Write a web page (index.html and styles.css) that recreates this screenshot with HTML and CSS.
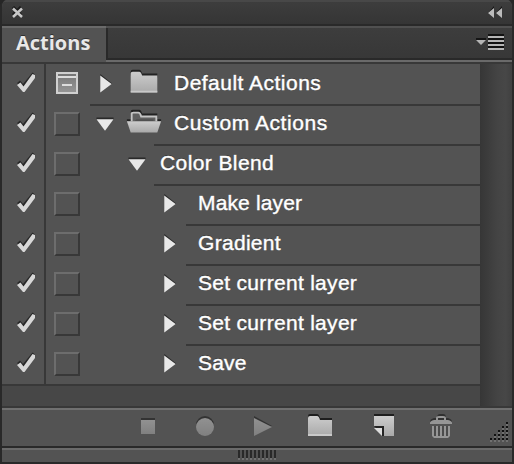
FILE: index.html
```html
<!DOCTYPE html>
<html lang="en">
<head>
<meta charset="utf-8">
<title>Actions</title>
<link rel="stylesheet" href="styles.css">
</head>
<body>
<svg class="defs" width="0" height="0">
  <defs>
    <linearGradient id="silver" x1="0" y1="0" x2="0" y2="1"><stop offset="0" stop-color="#cdcdcd"/><stop offset="1" stop-color="#a9a9a9"/></linearGradient>
    <linearGradient id="dim" x1="0" y1="0" x2="0" y2="1"><stop offset="0" stop-color="#919191"/><stop offset="1" stop-color="#808080"/></linearGradient>
    <linearGradient id="dialog" x1="0" y1="0" x2="0" y2="1"><stop offset="0" stop-color="#777"/><stop offset="1" stop-color="#969696"/></linearGradient>
    <symbol id="check" viewBox="0 0 42 40"><path d="M15 17l3-2.500 3 3.500 9.500-11.500 2.500 2-11 16z" fill="#292929"/><path d="M15 19l3.500-2.500 3 4L30.500 8l2.500 1v3L22.500 26H21z" fill="#d8d8d8"/></symbol>
    <symbol id="right" viewBox="0 0 18 40"><path d="M4 8.500L16.500 18.500 4 25z" fill="#292929"/><path d="M4 10L16 19 4 28z" fill="#e8e8e8"/></symbol>
    <symbol id="down" viewBox="0 0 18 40"><path d="M0 12h18v2l-2 2H2l-2-2z" fill="#292929"/><path d="M0 14h18L9 26z" fill="#e8e8e8"/></symbol>
    <symbol id="folder" viewBox="0 0 36 40"><path d="M4 10V6q0-2 2-2h7q2 0 3 4h16v4z" fill="#222"/><path d="M4 8q0-2 2-2h7q2 0 3 4h16v18H4z" fill="url(#silver)"/><path d="M4 26h28v2H4z" fill="#c9c9c9"/></symbol>
    <symbol id="folder-open" viewBox="0 0 36 40"><path d="M4 9V6q0-2 2-2h7q2 0 3 4h16v5H4zM0 14h36v2H0z" fill="#222"/><path d="M5 16V8q0-1 2-1h5q2 0 3 4h16v5" fill="#606060" stroke="#c4c4c4" stroke-width="2"/><path d="M10 14h18v2H8z" fill="#505050"/><path d="M0 16h36l-4 12H4z" fill="url(#silver)"/></symbol>
  </defs>
</svg>
<main class="panel">
  <header class="titlebar">
    <svg width="14" height="14" viewBox="0 0 14 14"><path d="M3 1l8 8M11 1l-8 8" stroke="#1b1b1b" stroke-width="3"/><path d="M3 2.500l9 8.500M12 2.500L3 11" stroke="#c8c8c8" stroke-width="2.500"/></svg>
    <svg width="14" height="14" viewBox="0 0 14 14"><path d="M6 0v5L0 7zM14 0v5L8 7z" fill="#171717"/><path d="M6 2v10L0 7zM14 2v10L8 7z" fill="#bcbcbc"/></svg>
  </header>
  <nav class="tabs">
    <div class="tab">Actions</div>
    <div class="tab-rest">
      <svg width="28" height="18" viewBox="0 0 28 18"><path d="M0 4h10v2L5 9 0 6z" fill="#151515"/><path d="M0 6h10L5 11z" fill="#b5b5b5"/><path d="M12 1h16M12 5h16M12 9h16M12 13h16" stroke="#111" stroke-width="2"/><path d="M12 3h16M12 7h16M12 11h16M12 15h16" stroke="#b5b5b5" stroke-width="2"/></svg>
    </div>
  </nav>
  <section class="content">
    <div class="list">
      <div class="row first"><div class="check"><svg width="42" height="40"><use href="#check"/></svg></div><div class="toggle"><svg class="dialog" width="22" height="22"><path d="M1 1h20v20H1z" fill="url(#dialog)" stroke="#d0d0d0" stroke-width="2"/><path d="M2 5h18M6 13h10" stroke="#ddd" stroke-width="2"/><path d="M2 3h18" stroke="#777" stroke-width="2"/></svg></div><div class="item set"><svg width="18" height="40"><use href="#right"/></svg><svg class="folder" width="36" height="40"><use href="#folder"/></svg><span class="t1">Default Actions</span></div></div>
      <div class="row"><div class="check"><svg width="42" height="40"><use href="#check"/></svg></div><div class="toggle"><i class="box"></i></div><div class="item set open"><svg width="18" height="40"><use href="#down"/></svg><svg class="folder" width="36" height="40"><use href="#folder-open"/></svg><span class="t2">Custom Actions</span></div></div>
      <div class="row"><div class="check"><svg width="42" height="40"><use href="#check"/></svg></div><div class="toggle"><i class="box"></i></div><div class="item action"><svg width="18" height="40"><use href="#down"/></svg><span class="t3">Color Blend</span></div></div>
      <div class="row"><div class="check"><svg width="42" height="40"><use href="#check"/></svg></div><div class="toggle"><i class="box"></i></div><div class="item step"><svg width="18" height="40"><use href="#right"/></svg><span class="t4">Make layer</span></div></div>
      <div class="row"><div class="check"><svg width="42" height="40"><use href="#check"/></svg></div><div class="toggle"><i class="box"></i></div><div class="item step"><svg width="18" height="40"><use href="#right"/></svg><span>Gradient</span></div></div>
      <div class="row"><div class="check"><svg width="42" height="40"><use href="#check"/></svg></div><div class="toggle"><i class="box"></i></div><div class="item step"><svg width="18" height="40"><use href="#right"/></svg><span>Set current layer</span></div></div>
      <div class="row"><div class="check"><svg width="42" height="40"><use href="#check"/></svg></div><div class="toggle"><i class="box"></i></div><div class="item step"><svg width="18" height="40"><use href="#right"/></svg><span>Set current layer</span></div></div>
      <div class="row last"><div class="check"><svg width="42" height="40"><use href="#check"/></svg></div><div class="toggle"><i class="box"></i></div><div class="item step"><svg width="18" height="40"><use href="#right"/></svg><span class="t4">Save</span></div></div>
    </div>
    <div class="scroll"></div>
  </section>
  <footer class="toolbar">
    <svg width="14" height="24"><path d="M0 4h14v3H0z" fill="#333"/><path d="M0 6h14v14H0z" fill="url(#dim)"/></svg>
    <svg width="18" height="24"><circle cx="9" cy="11" r="9" fill="#333"/><circle cx="9" cy="13" r="9" fill="url(#dim)"/></svg>
    <svg width="18" height="24"><path d="M0 2l18 10-18 8z" fill="#333"/><path d="M0 4l18 9-18 9z" fill="url(#dim)"/></svg>
    <svg width="24" height="24"><path d="M0 5V2q0-2 2-2h7q2 0 3 4h12v4z" fill="#1e1e1e"/><path d="M0 4q0-2 2-2h7q2 0 3 4h12v16H0z" fill="url(#silver)"/><path d="M0 20h24v2H0z" fill="#c9c9c9"/></svg>
    <svg width="20" height="24"><path d="M0 0h20v3H0z" fill="#1e1e1e"/><path d="M0 2h20v20H10V12H0z" fill="url(#silver)"/><path d="M0 12h10v10H8v-8H2z" fill="#242424"/><path d="M0 14h8v8z" fill="#ddd"/></svg>
    <svg width="22" height="24"><path d="M0 8q0-3 4-4h3q0-4 3-4h3q3 0 3 4h2q4 1 4 4z" fill="#303030"/><path d="M0 10V9q0-2 4-3h14q4 1 4 3v1z" fill="#969696"/><path d="M7 7V4q0-1 2-1h4q2 0 2 1v3" fill="none" stroke="#969696" stroke-width="2"/><path d="M8 5h6" stroke="#333" stroke-width="2"/><path d="M2 12h18v10l-2 2H4l-2-2z" fill="#969696"/><path d="M5 12v10M9 12v10M13 12v10M17 12v10" stroke="#4b4b4b" stroke-width="2"/></svg>
    <svg width="18" height="20"><path d="M17 0v18M13 4v14M9 8v10M5 12v6M1 16v2" stroke="#111" stroke-width="2" stroke-dasharray="2 2"/><path d="M17 2v18M13 6v14M9 10v10M5 14v6M1 18v2" stroke="#707070" stroke-width="2" stroke-dasharray="2 2"/></svg>
  </footer>
  <div class="grip"><i></i></div>
</main>
</body>
</html>
```
FILE: styles.css
```css
* { box-sizing: border-box; }
body { margin: 0; background: #262626; }
svg { display: block; flex: none; }
.defs { position: absolute; }
.panel {
  width: 514px; height: 464px;
  border: solid #292929; border-width: 0 2px 2px;
  border-radius: 7px 7px 0 0;
  overflow: hidden;
  display: flex; flex-direction: column;
  background: #535353;
}
.titlebar {
  height: 26px;
  display: flex; justify-content: space-between;
  padding: 4px 10px 0 8px;
  border-top: 2px solid #484848; border-bottom: 2px solid #292929;
  background: linear-gradient(#3d3d3d, #353535);
}
.tabs { height: 38px; display: flex; border-bottom: 2px solid #383838; }
.tab {
  width: 104px; height: 36px;
  padding-left: 14px;
  border-top: 2px solid #6a6a6a;
  background: #535353;
  color: #e8e8e8;
  font: bold 20px/30px "Open Sans", sans-serif;
  text-shadow: 0 -1px #303030;
}
.tab-rest {
  flex: 1;
  display: flex; justify-content: flex-end;
  padding: 6px 8px 0 0;
  border-top: 2px solid #505050; border-bottom: 2px solid #6a6a6a;
  background: linear-gradient(#3d3d3d, #373737);
  box-shadow: inset 2px -2px #292929;
}
.content { height: 344px; display: flex; background: #474747; }
.list { width: 478px; }
.row { height: 40px; display: flex; background: #535353; }
.first { height: 42px; }
.first svg { margin-top: 2px; }
.check { width: 44px; border-right: 2px solid #383838; overflow: hidden; }
.toggle { width: 44px; padding: 6px 0 0 8px; }
.box {
  display: block; width: 26px; height: 24px;
  border: 2px solid; border-color: #6d6d6d #383838 #383838 #6d6d6d;
}
.toggle .dialog { margin: 2px 0 0 2px; }
.item {
  flex: 1; display: flex;
  border-bottom: 2px solid #383838;
  color: #fff;
  font: 21px/34px "Liberation Sans", Arial, sans-serif;
  letter-spacing: .3px;
  text-shadow: 0 -1px #333;
  -webkit-text-stroke: .4px #fff;
  white-space: nowrap;
}
.item svg { height: 38px; overflow: visible; }
.first .item span { padding-top: 2px; }
.t1 { letter-spacing: .48px; }
.t2 { letter-spacing: .56px; }
.t3 { letter-spacing: .4px; }
.t4 { letter-spacing: .15px; }
.set { padding-left: 6px; }
.set .folder { margin-left: 12px; }
.set span { padding-left: 12px; }
.open, .action, .step {
  border-bottom-color: transparent;
  background: linear-gradient(#383838, #383838) no-repeat 64px 100% / 100% 2px;
  background-origin: border-box; background-clip: border-box;
}
.action { padding-left: 38px; }
.action span { padding-left: 14px; }
.step { padding-left: 70px; background-position-x: 96px; }
.step span { padding-left: 20px; }
.last { border-bottom: 2px solid #383838; }
.last .item { background: none; border: 0; }
.scroll { width: 32px; background: linear-gradient(90deg, #363636, #444 55%, #474747 80%, #404040); }
.toolbar {
  height: 38px;
  display: flex;
  padding: 4px 4px 0 139px;
  border-top: 2px solid #707070;
  box-shadow: 0 -2px #383838;
}
.toolbar svg:nth-child(2) { margin-left: 41px; }
.toolbar svg:nth-child(3) { margin-left: 40px; }
.toolbar svg:nth-child(4) { margin-left: 36px; }
.toolbar svg:nth-child(5) { margin-left: 42px; }
.toolbar svg:nth-child(6) { margin-left: 36px; }
.toolbar svg:nth-child(7) { margin: 8px 0 0 auto; }
.grip {
  height: 16px;
  border-top: 2px solid #292929;
  box-shadow: inset 0 2px #6a6a6a;
  display: flex; justify-content: center; padding-top: 2px;
}
.grip i { width: 38px; height: 10px; border-bottom: 2px solid transparent; background: repeating-linear-gradient(90deg, #292929 0 2px, transparent 2px 4px) padding-box, repeating-linear-gradient(90deg, #707070 0 2px, transparent 2px 4px) border-box; }
```
